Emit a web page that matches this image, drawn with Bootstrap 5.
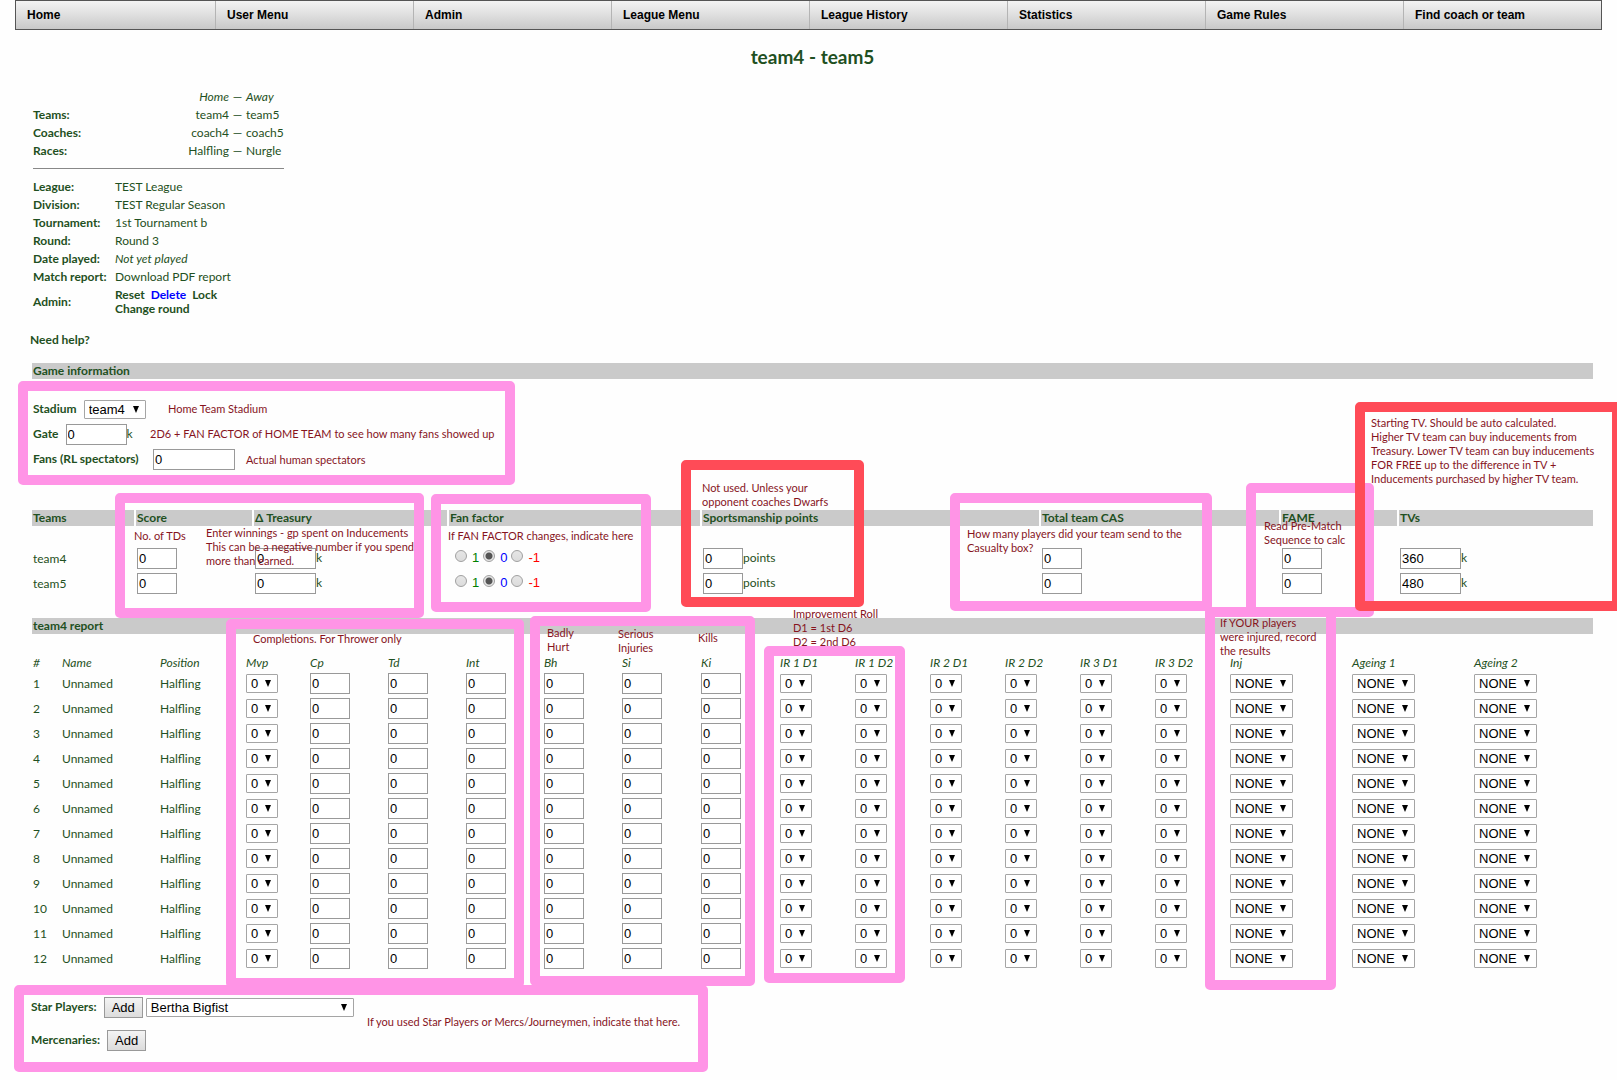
<!DOCTYPE html>
<html lang="en">
<head>
<meta charset="utf-8">
<meta name="viewport" content="width=device-width, initial-scale=1">
<title>team4 - team5</title>
<link href="https://cdn.jsdelivr.net/npm/bootstrap@5.3.0/dist/css/bootstrap.min.css" rel="stylesheet">
<style>
body { min-height: 100vh; font-family: Lato, "Open Sans", sans-serif; font-size: 12px; line-height: 14px; color: #1f5022; background: #fefefe; overflow-x: hidden; }
a { color: inherit; text-decoration: none; }
.link-delete { color: #00f; }

/* top menu */
.menubar { margin: 0 15px; height: 30px; border: 1px solid #555; background: linear-gradient(#f4f4f4, #c9c9c9); font: bold 12px/28px "Liberation Sans", sans-serif; }
.menubar a { flex: 1 1 0; padding-left: 11px; color: #000; border-right: 1px solid #b4b4b4; }
.menubar a:first-child { flex-basis: 14px; }
.menubar a:last-child { border-right: 0; }
.page-title { margin: 16px 0 0 8px; font-size: 19px; line-height: 22px; font-weight: 700; }
.content-area { padding: 0 24px 0 32px; }

/* match facts */
.info-table { border-collapse: separate; border-spacing: 0 2px; margin-top: 19px; }
.info-table td { padding: 1px 0; }
.info-table .label-col { width: 82px; padding-left: 1px; font-weight: 700; }
.info-table hr { margin: 7px 0 8px 1px; border-top: 1px solid #888; opacity: 1; }
.help-link { margin: 14px 0 0 -2px; }

/* sections and data tables */
.bar { height: 16px; margin: 0; padding-left: 1px; font-size: 12px; line-height: 16px; font-weight: 700; background: #cacaca; }
.grid-table { table-layout: fixed; width: 100%; border-collapse: separate; border-spacing: 0; }
.grid-table td, .grid-table th { padding: 0 0 0 1px; height: 25px; white-space: nowrap; font-weight: 400; }
.grid-table th.bar-cell { height: 16px; font-weight: 700; border-left: 2px solid #fefefe; background: #cacaca; }
.grid-table th.bar-cell:first-child { border-left: 0; }
.grid-table td.cell { padding-left: 3px; }
.grid-table td.ff-cell { padding-left: 8px; }
#game { margin-top: 16px; }
.game-fields { padding-top: 17px; }
.field-row { height: 25px; line-height: 25px; padding-left: 1px; }
.field-row label, .extra-row label, .extra-row span { margin-right: 4px; }
.fans-label { display: inline-block; min-width: 113px; }
.teams-table { margin-top: 39px; }
.teams-table tbody::before { content: ""; display: block; height: 20px; }
#report { margin-top: 22px; }
.players-table { margin-top: 20px; }
.grid-table.players-table th { height: 17px; }
.extras { padding-top: 23px; margin-left: -1px; }
.extra-row { height: 33px; line-height: 25px; }

/* form controls */
.num, .pick, .push { font: 13px/17px "Liberation Sans", sans-serif; color: #000; border: 1px solid #a5a5a5; vertical-align: middle; }
.num { width: 40px; height: 21px; padding: 1px; background: #fff; border-color: #999; }
.num-k { width: 61px; }
.num-fans { width: 82px; }
.pick { width: 32px; height: 19px; padding: 0 0 0 4px; border-radius: 1px; appearance: none; background: #fff url("data:image/svg+xml,%3Csvg xmlns='http://www.w3.org/2000/svg' width='6' height='7'%3E%3Cpath d='M0 0h6L3 7z'/%3E%3C/svg%3E") no-repeat right 6px center; }
.pick-inj { width: 63px; }
.pick-team { width: 62px; }
.pick-star { width: 208px; }
.push { height: 21px; width: 39px; padding: 0; border-color: #999; background: linear-gradient(#f4f4f4, #dcdcdc); }
.dot { appearance: none; width: 12px; height: 12px; margin: 0 5px 6px 0; border: 1px solid #a0a0a0; border-radius: 50%; background: linear-gradient(#e6e6e6, #dcdcdc); vertical-align: middle; }
.dot:checked { background: radial-gradient(circle, #555 0 3px, #e6e6e6 4px); }
.ff { font: 13px/17px "Liberation Sans", sans-serif; margin-right: 4px; }
.ff-up { color: #008000; } .ff-same { color: #00f; } .ff-down { color: #f00; }

/* tutorial annotations laid over the form */
.frame { position: absolute; border: 10px solid #ff94e6; border-radius: 5px; pointer-events: none; }
.frame-red { border-color: #ff4b57; }
.note { position: absolute; margin: 0; font-size: 11px; line-height: 14px; color: #86141d; white-space: nowrap; pointer-events: none; }
#f-fame { left: 1246px; top: 483px; width: 128px; height: 134px; }
#f-stadium { left: 18px; top: 381px; width: 497px; height: 104px; }
#f-score { left: 115px; top: 493px; width: 309px; height: 125px; }
#f-fan { left: 431px; top: 494px; width: 220px; height: 118px; }
#f-sport { left: 681px; top: 460px; width: 183px; height: 147px; }
#f-cas { left: 950px; top: 493px; width: 262px; height: 118px; }
#f-tv { left: 1355px; right: -5px; top: 402px; height: 209px; }
#f-comp { left: 226px; top: 619px; width: 298px; height: 369px; }
#f-hurt { left: 530px; top: 616px; width: 225px; height: 370px; }
#f-roll { left: 764px; top: 646px; width: 141px; height: 337px; }
#f-inj { left: 1205px; top: 607px; width: 131px; height: 383px; }
#f-star { left: 14px; top: 985px; width: 694px; height: 87px; }
#n-stadium { left: 168px; top: 402px; }
#n-gate { left: 150px; top: 427px; }
#n-fans { left: 246px; top: 453px; }
#n-tds { left: 134px; top: 529px; }
#n-treasury { left: 206px; top: 526px; }
#n-fan { left: 448px; top: 529px; }
#n-sport { left: 702px; top: 481px; }
#n-cas { left: 967px; top: 527px; }
#n-fame { left: 1264px; top: 519px; }
#n-tv { left: 1371px; top: 416px; }
#n-inj { left: 1220px; top: 616px; }
#n-roll { left: 793px; top: 607px; }
#n-comp { left: 253px; top: 632px; }
#n-badly { left: 547px; top: 626px; }
#n-serious { left: 618px; top: 627px; }
#n-kills { left: 698px; top: 631px; }
#n-star { left: 367px; top: 1015px; }
</style>
</head>
<body class="position-relative">
<nav class="menubar d-flex" aria-label="Main menu">
  <a href="#">Home</a><a href="#">User Menu</a><a href="#">Admin</a><a href="#">League Menu</a><a href="#">League History</a><a href="#">Statistics</a><a href="#">Game Rules</a><a href="#">Find coach or team</a>
</nav>
<h1 class="page-title text-center">team4 - team5</h1>

<main class="content-area">
  <table class="info-table">
    <colgroup><col style="width:83px"><col style="width:114px"><col style="width:17px"><col></colgroup>
    <tbody>
    <tr><td class="label-col"></td><td class="text-end fst-italic">Home</td><td class="text-center">—</td><td class="fst-italic">Away</td></tr>
    <tr><td class="label-col">Teams:</td><td class="text-end">team4</td><td class="text-center">—</td><td>team5</td></tr>
    <tr><td class="label-col">Coaches:</td><td class="text-end">coach4</td><td class="text-center">—</td><td>coach5</td></tr>
    <tr><td class="label-col">Races:</td><td class="text-end">Halfling</td><td class="text-center">—</td><td>Nurgle</td></tr>
    <tr><td colspan="4" class="p-0"><hr></td></tr>
    <tr><td class="label-col">League:</td><td colspan="3">TEST League</td></tr>
    <tr><td class="label-col">Division:</td><td colspan="3">TEST Regular Season</td></tr>
    <tr><td class="label-col">Tournament:</td><td colspan="3">1st Tournament b</td></tr>
    <tr><td class="label-col">Round:</td><td colspan="3">Round 3</td></tr>
    <tr><td class="label-col">Date played:</td><td colspan="3" class="fst-italic">Not yet played</td></tr>
    <tr><td class="label-col text-nowrap">Match report:</td><td colspan="3"><a href="#">Download PDF report</a></td></tr>
    <tr><td class="label-col">Admin:</td><td colspan="3" class="fw-bold"><a href="#">Reset</a>&nbsp; <a href="#" class="link-delete">Delete</a>&nbsp; <a href="#">Lock</a><br><a href="#">Change round</a></td></tr>
    </tbody>
  </table>
  <a href="#" class="help-link d-inline-block fw-bold">Need help?</a>

  <h2 class="bar" id="game">Game information</h2>
  <form>
    <div class="game-fields">
      <div class="field-row"><label class="fw-bold" for="stadium">Stadium</label> <select id="stadium" class="pick pick-team"><option>team4</option></select></div>
      <div class="field-row"><label class="fw-bold" for="gate">Gate</label> <input id="gate" class="num num-k" value="0">k</div>
      <div class="field-row"><label class="fw-bold fans-label" for="fans">Fans (RL spectators)</label> <input id="fans" class="num num-fans" value="0"></div>
    </div>
    <table class="grid-table teams-table">
      <colgroup><col style="width:102px"><col style="width:118px"><col style="width:195px"><col style="width:253px"><col style="width:339px"><col style="width:240px"><col style="width:118px"><col></colgroup>
      <thead><tr><th class="bar-cell">Teams</th><th class="bar-cell">Score</th><th class="bar-cell">Δ Treasury</th><th class="bar-cell">Fan factor</th><th class="bar-cell">Sportsmanship points</th><th class="bar-cell">Total team CAS</th><th class="bar-cell">FAME</th><th class="bar-cell">TVs</th></tr></thead>
      <tbody id="teams"></tbody>
    </table>
    <h2 class="bar" id="report">team4 report</h2>
    <table class="grid-table players-table">
      <colgroup><col style="width:29px"><col style="width:98px"><col style="width:86px"><col style="width:64px"><col style="width:78px"><col style="width:78px"><col style="width:78px"><col style="width:78px"><col style="width:79px"><col style="width:79px"><col style="width:75px"><col style="width:75px"><col style="width:75px"><col style="width:75px"><col style="width:75px"><col style="width:75px"><col style="width:122px"><col style="width:122px"><col></colgroup>
      <thead><tr id="heads"></tr></thead>
      <tbody id="players"></tbody>
    </table>
    <div class="extras">
      <div class="extra-row"><label class="fw-bold" for="star">Star Players:</label> <button type="button" class="push">Add</button> <select id="star" class="pick pick-star"><option>Bertha Bigfist</option></select></div>
      <div class="extra-row"><span class="fw-bold">Mercenaries:</span> <button type="button" class="push">Add</button></div>
    </div>
  </form>
</main>

<div class="frame" id="f-fame"></div><div class="frame" id="f-stadium"></div><div class="frame" id="f-score"></div><div class="frame" id="f-fan"></div><div class="frame frame-red" id="f-sport"></div><div class="frame" id="f-cas"></div><div class="frame" id="f-comp"></div><div class="frame" id="f-hurt"></div><div class="frame" id="f-roll"></div><div class="frame" id="f-inj"></div><div class="frame frame-red" id="f-tv"></div><div class="frame" id="f-star"></div>
<p class="note" id="n-stadium">Home Team Stadium</p>
<p class="note" id="n-gate">2D6 + FAN FACTOR of HOME TEAM to see how many fans showed up</p>
<p class="note" id="n-fans">Actual human spectators</p>
<p class="note" id="n-tds">No. of TDs</p>
<p class="note" id="n-treasury">Enter winnings - gp spent on Inducements<br>This can be a negative number if you spend<br>more than earned.</p>
<p class="note" id="n-fan">If FAN FACTOR changes, indicate here</p>
<p class="note" id="n-sport">Not used. Unless your<br>opponent coaches Dwarfs</p>
<p class="note" id="n-cas">How many players did your team send to the<br>Casualty box?</p>
<p class="note" id="n-fame">Read Pre-Match<br>Sequence to calc</p>
<p class="note" id="n-tv">Starting TV. Should be auto calculated.<br>Higher TV team can buy inducements from<br>Treasury. Lower TV team can buy inducements<br>FOR FREE up to the difference in TV +<br>Inducements purchased by higher TV team.</p>
<p class="note" id="n-inj">If YOUR players<br>were injured, record<br>the results</p>
<p class="note" id="n-roll">Improvement Roll<br>D1 = 1st D6<br>D2 = 2nd D6</p>
<p class="note" id="n-comp">Completions. For Thrower only</p>
<p class="note" id="n-badly">Badly<br>Hurt</p>
<p class="note" id="n-serious">Serious<br>Injuries</p>
<p class="note" id="n-kills">Kills</p>
<p class="note" id="n-star">If you used Star Players or Mercs/Journeymen, indicate that here.</p>

<script src="https://cdn.jsdelivr.net/npm/bootstrap@5.3.0/dist/js/bootstrap.bundle.min.js"></script>
<script>
const num = (label, value = 0, cls = '') => `<input class="num ${cls}" aria-label="${label}" value="${value}">`;
const pick = (label, value, cls = '') => `<select class="pick ${cls}" aria-label="${label}"><option>${value}</option></select>`;
const factor = t => [['up', '1'], ['same', '0'], ['down', '-1']].map(([k, v]) =>
  `<input type="radio" class="dot" id="ff-${t}-${k}" name="ff-${t}" ${v === '0' ? 'checked' : ''}><label class="ff ff-${k}" for="ff-${t}-${k}">${v}</label>`).join('');

document.getElementById('teams').innerHTML = [['team4', 360], ['team5', 480]].map(([t, tv]) =>
  `<tr><td>${t}</td><td class="cell">${num(t + ' score')}</td><td class="cell">${num(t + ' treasury', 0, 'num-k')}k</td><td class="ff-cell">${factor(t)}</td><td class="cell">${num(t + ' sportsmanship')}points</td><td class="cell">${num(t + ' casualties')}</td><td class="cell">${num(t + ' FAME')}</td><td class="cell">${num(t + ' TV', tv, 'num-k')}k</td></tr>`).join('');

const stats = ['Cp', 'Td', 'Int', 'Bh', 'Si', 'Ki'];
const rolls = ['IR 1 D1', 'IR 1 D2', 'IR 2 D1', 'IR 2 D2', 'IR 3 D1', 'IR 3 D2'];
const injuries = ['Inj', 'Ageing 1', 'Ageing 2'];
document.getElementById('heads').innerHTML = ['#', 'Name', 'Position', 'Mvp', ...stats, ...rolls, ...injuries]
  .map(h => `<th scope="col" class="fst-italic">${h}</th>`).join('');
let rows = '';
for (let n = 1; n <= 12; n++) {
  rows += `<tr><td>${n}</td><td>Unnamed</td><td>Halfling</td><td>${pick('Mvp ' + n, 0)}</td>`
    + stats.map(s => `<td>${num(s + ' ' + n)}</td>`).join('')
    + rolls.map(s => `<td>${pick(s + ' ' + n, 0)}</td>`).join('')
    + injuries.map(s => `<td>${pick(s + ' ' + n, 'NONE', 'pick-inj')}</td>`).join('') + '</tr>';
}
document.getElementById('players').innerHTML = rows;
</script>
</body>
</html>
